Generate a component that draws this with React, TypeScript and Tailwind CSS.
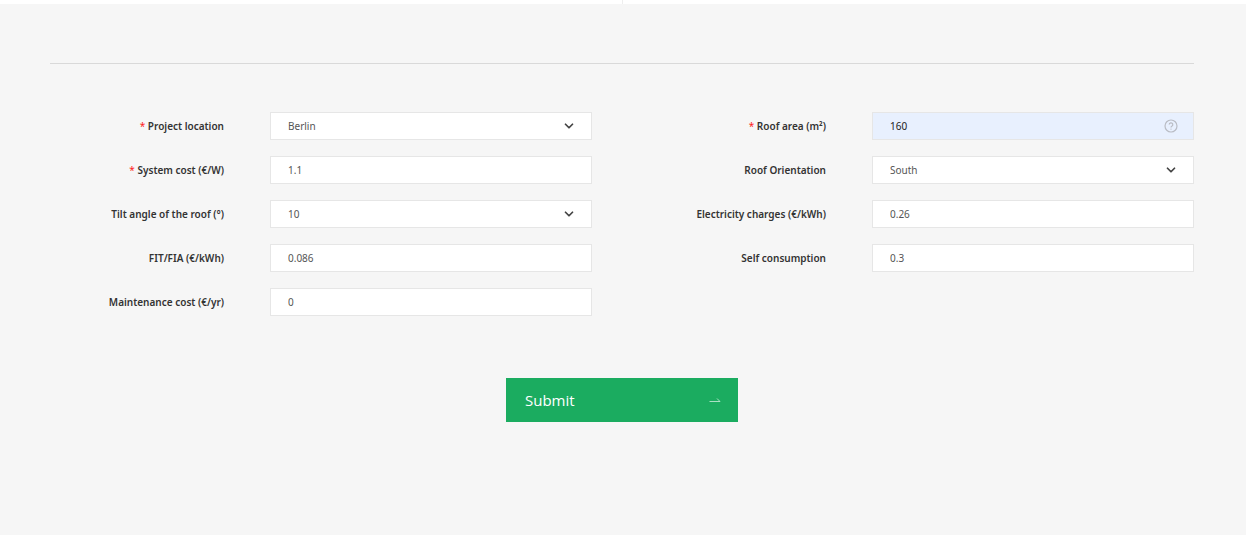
import React from 'react';
import { ChevronDown } from 'lucide-react';

type Field = {
    id: string;
    label: string;
    value: string;
    required?: boolean;
    options?: string[];
    help?: boolean;
};

const leftFields: Field[] = [
    { id: 'location', label: 'Project location', value: 'Berlin', required: true, options: ['Berlin'] },
    { id: 'systemCost', label: 'System cost (€/W)', value: '1.1', required: true },
    { id: 'tilt', label: 'Tilt angle of the roof (°)', value: '10', options: ['10'] },
    { id: 'fit', label: 'FIT/FIA (€/kWh)', value: '0.086' },
    { id: 'maintenance', label: 'Maintenance cost (€/yr)', value: '0' },
];

const rightFields: Field[] = [
    { id: 'area', label: 'Roof area (m²)', value: '160', required: true, help: true },
    { id: 'orientation', label: 'Roof Orientation', value: 'South', options: ['South'] },
    { id: 'charges', label: 'Electricity charges (€/kWh)', value: '0.26' },
    { id: 'selfConsumption', label: 'Self consumption', value: '0.3' },
];

function HelpIcon() {
    return (
        <svg viewBox="0 0 14 14" fill="none" stroke="#b9bcc4" className="w-3.5 h-3.5">
            <circle cx="7" cy="7" r="6" strokeWidth="1.2" />
            <path d="M5.2 5.6a1.8 1.8 0 1 1 2.6 1.6c-.6.3-.8.6-.8 1.2" strokeWidth="1.2" />
            <circle cx="7" cy="10.1" r=".7" fill="#b9bcc4" stroke="none" />
        </svg>
    );
}

function FormRow({ field }: { field: Field }) {
    const box = 'block w-full h-7 border border-[#e6e6e6] pl-[17px] pr-10 text-[10px] outline-none';
    return (
        <div className="flex items-center gap-[46px]">
            <label htmlFor={field.id} className="w-[174px] shrink-0 text-right text-[10px] leading-4 font-semibold text-[#333]">
                {field.required && <span className="font-normal text-[#ff2020]">* </span>}
                {field.label}
            </label>
            <div className="relative flex-1">
                {field.options ? (
                    <select id={field.id} defaultValue={field.value} className={`${box} appearance-none bg-white text-[#555]`}>
                        {field.options.map((option) => (
                            <option key={option}>{option}</option>
                        ))}
                    </select>
                ) : (
                    <input
                        id={field.id}
                        type="text"
                        defaultValue={field.value}
                        className={`${box} ${field.help ? 'bg-[#e8f0fe] text-[#222]' : 'bg-white text-[#555]'}`}
                    />
                )}
                {(field.options || field.help) && (
                    <span className="pointer-events-none absolute inset-y-0 right-4 flex w-3.5 items-center justify-center">
                        {field.help ? <HelpIcon /> : <ChevronDown className="w-3.5 h-3.5 text-[#444]" strokeWidth={3} />}
                    </span>
                )}
            </div>
        </div>
    );
}

export default function App() {
    return (
        <main className="flex min-h-screen flex-col bg-[#f6f6f6] font-['Noto_Sans',sans-serif]">
            <div className="grid h-1 grid-cols-2 bg-white">
                <div className="border-r border-[#eee]" />
            </div>
            <form className="flex-1 pt-[59px] pb-28 pl-[50px] pr-[52px]" onSubmit={(e) => e.preventDefault()}>
                <hr className="border-[#d9d9d9]" />
                <div className="mt-12 grid grid-cols-2 gap-[60px]">
                    <div className="flex flex-col gap-4">
                        {leftFields.map((field) => (
                            <FormRow key={field.id} field={field} />
                        ))}
                    </div>
                    <div className="flex flex-col gap-4">
                        {rightFields.map((field) => (
                            <FormRow key={field.id} field={field} />
                        ))}
                    </div>
                </div>
                <button
                    type="submit"
                    className="mx-auto mt-[62px] flex h-11 w-[232px] items-center justify-between bg-[#1bac60] pl-[19px] pr-[17px] font-['Open_Sans',sans-serif] text-[15px] text-white"
                >
                    Submit
                    <svg viewBox="0 0 12 6" fill="none" stroke="currentColor" className="w-3 h-1.5 opacity-70">
                        <path d="M0.5 4.5H11L8 1.5" strokeWidth="0.9" />
                    </svg>
                </button>
            </form>
        </main>
    );
}
